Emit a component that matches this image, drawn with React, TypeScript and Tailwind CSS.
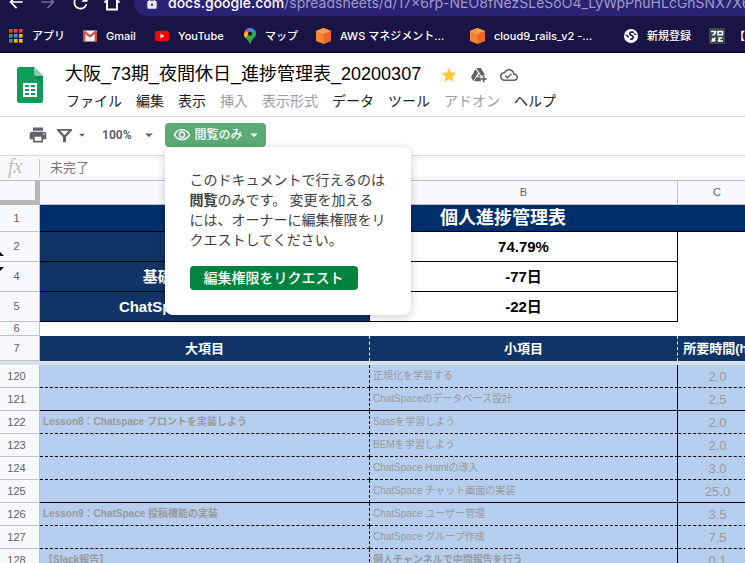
import type { ReactNode } from "react";
import {
  MdArrowBack,
  MdArrowDropDown,
  MdArrowForward,
  MdLock,
  MdOutlineCloudDone,
  MdOutlineVisibility,
  MdPrint,
  MdRefresh,
  MdStar,
} from "react-icons/md";

const uiFont = "font-['Roboto','Noto_Sans_CJK_JP',sans-serif]";
const chromeFont = "font-['Inter','Noto_Sans_CJK_JP',sans-serif]";
const sheetFont = "font-['Liberation_Sans','Noto_Sans_CJK_JP',sans-serif]";

/* ---------- icons ---------- */

function AppsIcon() {
  const colors = [
    "#ea4335", "#ea4335", "#ea4335",
    "#34a853", "#4285f4", "#fbbc04",
    "#34a853", "#fbbc04", "#fbbc04",
  ];
  return (
    <svg width="14" height="14" viewBox="0 0 14 14" aria-hidden="true">
      {colors.map((c, i) => (
        <rect key={i} x={(i % 3) * 5} y={Math.floor(i / 3) * 5} width="3.6" height="3.6" fill={c} />
      ))}
    </svg>
  );
}

function GmailIcon() {
  return (
    <svg width="14" height="14" viewBox="0 0 14 14" aria-hidden="true">
      <rect y="1.5" width="14" height="11" rx="1" fill="#f1f1f1" />
      <path d="M0 2.5v9a1 1 0 0 0 1 1h1.3V3.8z" fill="#d54b3d" />
      <path d="M14 2.5v9a1 1 0 0 1-1 1h-1.3V3.8z" fill="#d54b3d" />
      <path d="M.8 2.4 7 7.4l6.2-5" stroke="#d54b3d" strokeWidth="2" fill="none" />
    </svg>
  );
}

function YouTubeIcon() {
  return (
    <svg width="14" height="14" viewBox="0 0 14 14" aria-hidden="true">
      <rect y="1.8" width="14" height="10.4" rx="2.6" fill="#f00" />
      <path d="M5.5 4.8v4.4L9.4 7z" fill="#fff" />
    </svg>
  );
}

function MapsIcon() {
  return (
    <svg width="12" height="16" viewBox="0 0 12 16" aria-hidden="true">
      <path d="M6 0C2.7 0 0 2.6 0 5.9c0 1.6.5 2.8 1.3 3.9L6 5.9z" fill="#ea4335" />
      <path d="M6 0c3.3 0 6 2.6 6 5.900L6 5.9 3 1z" fill="#4285f4" />
      <path d="M0 5.900c0 1.700.6 2.900 1.500 4.100L6 5.900 2 3z" fill="#fbbc04" />
      <path d="M12 5.900C12 10 7.200 10.700 6.500 15.500c-.1.500-.9.500-1 0C5.100 13 3.400 11.600 1.500 10L10.500 2c1 1 1.500 2.400 1.500 3.900z" fill="#34a853" />
      <circle cx="6" cy="5.8" r="2.1" fill="#1a1444" />
    </svg>
  );
}

function CubeIcon() {
  return (
    <svg width="15" height="16" viewBox="0 0 15 16" aria-hidden="true">
      <path d="M7.500 0 15 3v10l-7.500 3L0 13V3z" fill="#f58536" />
      <path d="M7.500 0 15 3 7.500 6 0 3z" fill="#ff9d4d" />
      <path d="M15 3v10l-7.500 3V6z" fill="#ec6629" />
    </svg>
  );
}

function GlobeIcon() {
  return (
    <svg width="14" height="14" viewBox="0 0 14 14" aria-hidden="true">
      <circle cx="7" cy="7" r="7" fill="#fff" />
      <path d="M10 3.500C8 2.500 5.800 3.200 5.800 4.800c0 2 3.600 1.300 3.600 3.300 0 1.800-2.200 2.600-3.200 1.600" stroke="#1a1444" strokeWidth="1.700" fill="none" />
      <path d="M1.500 6.200c1.800 0 2.700.8 3 2.300M9.800 4.800c.9.500 1.800.7 2.700.5" stroke="#1a1444" strokeWidth="1.300" fill="none" />
    </svg>
  );
}

function ProMemoIcon() {
  return (
    <svg width="16" height="16" viewBox="0 0 16 16" aria-hidden="true">
      <rect width="16" height="16" fill="#38474a" />
      <path d="M2 3.500h4.500c0 2-1 3-3 3.700M9 3.500h4.500v3.200H9zM6 9.500c-.3 2-1.600 3.400-3.700 4M3 10.500l3.200 2.500M9.300 10h4M8.700 13h5.300M10.300 10v3" stroke="#fff" strokeWidth="1.600" fill="none" />
    </svg>
  );
}

function HomeIcon() {
  return (
    <svg width="18" height="18" viewBox="0 0 18 18" aria-hidden="true">
      <path d="M1.500 9.500 9 2.500l7.500 7M4 8v8.500h10V8" stroke="#fff" strokeWidth="1.900" fill="none" />
    </svg>
  );
}

function SheetsLogo() {
  return (
    <svg width="26" height="36" viewBox="0 0 26 36" className="shrink-0" aria-label="スプレッドシート" role="img">
      <path d="M2.500 0H17l9 9v24.500a2.500 2.500 0 0 1-2.500 2.500h-21A2.500 2.500 0 0 1 0 33.500v-31A2.500 2.500 0 0 1 2.500 0z" fill="#0f9d58" />
      <path d="M17 0l9 9h-6.500A2.500 2.500 0 0 1 17 6.500z" fill="#87ceac" />
      <path d="M17.500 9H26v8z" fill="#0b8a4c" opacity=".5" />
      <path d="M6 16v14h14V16zm2 2h4v2H8zm6 0h4v2h-4zm-6 4h4v2H8zm6 0h4v2h-4zm-6 4h4v2H8zm6 0h4v2h-4z" fill="#fff" fillRule="evenodd" />
    </svg>
  );
}

function DriveAddIcon() {
  return (
    <svg width="18" height="18" viewBox="0 0 18 18" aria-hidden="true">
      <path d="M6.400 2h4.400l4.300 7.300a4 4 0 0 0-3.600.9z" fill="#5f6368" />
      <path d="M5.700 2.900 8 6.900 3.300 15 1 11z" fill="#5f6368" />
      <path d="M6.300 11.300h4.500a4 4 0 0 0 .3 4H4z" fill="#5f6368" />
      <path d="M9 7.900l1.500 2.500H7.500z" fill="#5f6368" />
      <path d="M13.700 9.800v6.400M10.500 13h6.400" stroke="#5f6368" strokeWidth="1.600" />
    </svg>
  );
}

function FilterIcon() {
  return (
    <svg width="15" height="13" viewBox="0 0 15 13" aria-hidden="true">
      <path d="M0 0h15v1.500L9 8v5H6V8L0 1.500zM3.300 1.800l4.200 4.400 4.200-4.400z" fill="#5f6368" fillRule="evenodd" />
    </svg>
  );
}

/* ---------- browser ---------- */

const bookmarks: { icon: ReactNode; label: string; width: string }[] = [
  { icon: <AppsIcon />, label: "アプリ", width: "w-[74px]" },
  { icon: <GmailIcon />, label: "Gmail", width: "w-[72px]" },
  { icon: <YouTubeIcon />, label: "YouTube", width: "w-[89px]" },
  { icon: <MapsIcon />, label: "マップ", width: "w-[72px]" },
  { icon: <CubeIcon />, label: "AWS マネジメント…", width: "w-[154px]" },
  { icon: <CubeIcon />, label: "cloud9_rails_v2 -…", width: "w-[154px]" },
  { icon: <GlobeIcon />, label: "新規登録", width: "w-[85px]" },
  { icon: <ProMemoIcon />, label: "【", width: "w-[90px]" },
];

function BrowserBar() {
  return (
    <div className={`${chromeFont} shrink-0 overflow-hidden border-b border-[#0a0533] bg-[#1a1444] text-white`}>
      <div className="flex h-4 items-end overflow-hidden">
        <div className="flex h-[28px] shrink-0 items-center gap-[12px] pl-[6px] pr-[13px]">
          <button aria-label="戻る"><MdArrowBack size={20} /></button>
          <button aria-label="進む"><MdArrowForward size={20} className="text-[#6e6a93]" /></button>
          <button aria-label="再読み込み"><MdRefresh size={21} /></button>
          <button aria-label="ホーム"><HomeIcon /></button>
        </div>
        <label className="flex h-[26px] min-w-0 flex-1 items-center rounded-l-full bg-[#2b2273] pl-[11px] text-[14px] leading-5">
          <MdLock size={14} className="mr-[9px] shrink-0 text-[#e8e8f0]" />
          <span className="font-medium">docs.google.com</span>
          <input
            aria-label="アドレス"
            className="min-w-0 flex-1 bg-transparent text-[#a09cc8] outline-none"
            defaultValue="/spreadsheets/d/17x6rp-NEO8fNezSLeSoO4_LyWpPhuHLcGhSNX7X6t"
          />
        </label>
      </div>
      <nav className="flex h-[36px] items-center pt-1 pl-[9px] text-[11px] font-medium">
        {bookmarks.map((b) => (
          <a key={b.label} href="#" className={`${b.width} flex shrink-0 items-center gap-[9px] whitespace-nowrap leading-4`}>
            {b.icon}
            {b.label}
          </a>
        ))}
      </nav>
    </div>
  );
}

/* ---------- document header ---------- */

const menus = [
  { label: "ファイル" },
  { label: "編集" },
  { label: "表示" },
  { label: "挿入", disabled: true },
  { label: "表示形式", disabled: true },
  { label: "データ" },
  { label: "ツール" },
  { label: "アドオン", disabled: true },
  { label: "ヘルプ" },
];

function DocHeader() {
  return (
    <header className="flex h-[64px] shrink-0 items-start border-b border-[#dadce0] pl-[17px]">
      <div className="pt-[14px]"><SheetsLogo /></div>
      <div className="pt-[9px] pl-[22px]">
        <div className="flex h-6 items-center">
          <h1 className={`${sheetFont} whitespace-nowrap text-[18px] leading-6 text-black`}>
            大阪_73期_夜間休日_進捗管理表_20200307
          </h1>
          <div className="flex items-center gap-[12px] pl-[19px] pt-[2px] text-[#5f6368]">
            <button aria-label="スター"><MdStar size={18} className="text-[#fcc934]" /></button>
            <button aria-label="ドライブに追加"><DriveAddIcon /></button>
            <button aria-label="ドキュメントのステータス"><MdOutlineCloudDone size={18} /></button>
          </div>
        </div>
        <nav className="flex gap-[14px] pt-[5px] pl-px text-[14px] leading-5">
          {menus.map((m) => (
            <button key={m.label} disabled={m.disabled} className="whitespace-nowrap text-[#202124] disabled:text-[#9aa0a6]">
              {m.label}
            </button>
          ))}
        </nav>
      </div>
    </header>
  );
}

function AccessPopup() {
  return (
    <div
      role="dialog"
      aria-label="閲覧のみ"
      className="absolute left-0 top-full z-10 w-[246px] rounded-lg bg-white px-[25px] pb-[25px] pt-[23px] shadow-[0_2px_10px_rgba(0,0,0,0.2)]"
    >
      <p className="text-[14px] leading-5 text-[#3c4043]">
        このドキュメントで行えるのは<b>閲覧</b>のみです。 変更を加えるには、オーナーに編集権限をリクエストしてください。
      </p>
      <button className="mt-4 flex h-6 items-center whitespace-nowrap rounded bg-[#00833e] px-[14px] text-[14px] font-medium leading-none text-white">
        編集権限をリクエスト
      </button>
    </div>
  );
}

function Toolbar() {
  return (
    <div className="flex h-[39px] shrink-0 items-center border-b border-[#dadce0] pb-[2px] pl-[28px] text-[#5f6368]">
      <button aria-label="印刷"><MdPrint size={20} /></button>
      <button aria-label="フィルタ" className="flex items-center pl-[9px]">
        <FilterIcon />
        <MdArrowDropDown size={14} className="ml-[3px]" />
      </button>
      <button aria-label="ズーム" className="flex items-center pl-[13px] text-[12px] font-bold">
        100%
        <MdArrowDropDown size={18} className="ml-[8px]" />
      </button>
      <div className="relative ml-[7px]">
        <button className="flex h-6 w-[101px] items-center rounded bg-[#5bab77] pl-2 text-[12px] font-medium leading-none text-white">
          <MdOutlineVisibility size={18} className="mr-1 shrink-0" />
          <span className="whitespace-nowrap">閲覧のみ</span>
          <MdArrowDropDown size={18} className="ml-[2px] shrink-0" />
        </button>
        <AccessPopup />
      </div>
    </div>
  );
}

function FormulaBar() {
  return (
    <label className="flex h-[25px] shrink-0 items-center border-b border-[#c0c0c0] bg-[#f8f9fa]">
      <span className="w-[39px] pb-1 pl-[8px] font-['Liberation_Serif',serif] text-[20px] italic leading-none text-[#c0c0c0]">fx</span>
      <span className="h-[18px] w-px bg-[#c6c6c6]" />
      <input
        aria-label="数式"
        readOnly
        value="未完了"
        className="ml-[10px] h-4 min-w-0 flex-1 bg-white text-[13px] leading-4 text-[#777] outline-none"
      />
    </label>
  );
}

/* ---------- grid ---------- */

type Row = { n: number; a?: string; b: string; c: string; bold?: boolean; end?: boolean };

const rows: Row[] = [
  { n: 120, b: "正規化を学習する", c: "2.0" },
  { n: 121, b: "ChatSpaceのデータベース設計", c: "2.5", end: true },
  { n: 122, a: "Lesson8：Chatspace フロントを実装しよう", b: "Sassを学習しよう", c: "2.0" },
  { n: 123, b: "BEMを学習しよう", c: "2.0" },
  { n: 124, b: "ChatSpace Hamlの導入", c: "3.0" },
  { n: 125, b: "ChatSpace チャット画面の実装", c: "25.0", end: true },
  { n: 126, a: "Lesson9：ChatSpace 投稿機能の実装", b: "ChatSpace ユーザー管理", c: "3.5" },
  { n: 127, b: "ChatSpace グループ作成", c: "7.5" },
  { n: 128, a: "【Slack報告】", b: "個人チャンネルで中間報告を行う", c: "0.1", bold: true },
];

const summary = [
  { n: 2, label: "進捗率", value: "74.79%" },
  { n: 4, label: "基礎 カリキュラム", value: "-77日" },
  { n: 5, label: "ChatSpace カリキュラム", value: "-22日" },
];

function RowHead({ n, children }: { n: number; children?: ReactNode }) {
  return (
    <th
      scope="row"
      className="relative border-r border-b border-[#c0c0c0] bg-[#f8f9fc] pr-[6px] text-center text-[11px] font-normal text-[#5f6368]"
    >
      {n}
      {children}
    </th>
  );
}

const colHead = "border-r border-b border-[#c0c0c0] bg-[#f8f9fc] text-center text-[11px] font-normal text-[#5f6368]";

function Grid() {
  return (
    <main className={`${sheetFont} min-h-0 flex-1 overflow-hidden`}>
      <table className="w-[966px] table-fixed border-separate border-spacing-0 whitespace-nowrap leading-none">
        <colgroup>
          <col className="w-[40px]" />
          <col className="w-[330px]" />
          <col className="w-[308px]" />
          <col className="w-[79px]" />
          <col className="w-[209px]" />
        </colgroup>
        <thead>
          <tr className="h-[24px]">
            <td className="border-r-5 border-b-5 border-[#b7b7b7] bg-[#f8f9fc]" />
            <th scope="col" className={colHead}>A</th>
            <th scope="col" className={colHead}>B</th>
            <th scope="col" className={colHead}>C</th>
            <th scope="col" className={colHead}>D</th>
          </tr>
        </thead>
        <tbody>
          <tr className="h-[27px]">
            <RowHead n={1} />
            <td colSpan={4} className="border-b border-black bg-[#002e6b] text-center text-[18px] font-bold text-white">
              個人進捗管理表
            </td>
          </tr>
          {summary.map((s) => (
            <tr key={s.n} className="h-[30px] text-[15px] font-bold">
              <RowHead n={s.n}>
                {s.n === 2 && (
                  <svg className="absolute bottom-[5px] left-0" width="4" height="4" viewBox="0 0 4 4" aria-hidden="true">
                    <path d="M0 0l4 4H0z" />
                  </svg>
                )}
                {s.n === 4 && (
                  <svg className="absolute left-0 top-[5px]" width="4" height="4" viewBox="0 0 4 4" aria-hidden="true">
                    <path d="M0 4l4-4H0z" />
                  </svg>
                )}
              </RowHead>
              <td className="border-r border-b border-black bg-[#113467] text-center text-white">{s.label}</td>
              <td className="border-r border-b border-black text-center text-black">{s.value}</td>
              <td colSpan={2} />
            </tr>
          ))}
          <tr className="h-[14px]">
            <RowHead n={6} />
            <td colSpan={4} />
          </tr>
          <tr className="h-[25px] bg-[#113467] text-center text-[13px] font-bold text-white">
            <RowHead n={7} />
            <td className="border-r border-dashed border-white">大項目</td>
            <td className="border-r border-dashed border-white">小項目</td>
            <td>所要時間(h)</td>
            <td />
          </tr>
          <tr className="h-1">
            <td colSpan={5} className="bg-[#dadfe8]" />
          </tr>
          {rows.map((r) => {
            const line = r.end ? "[border-bottom-style:solid]" : "[border-bottom-style:dashed]";
            return (
              <tr key={r.n} className="h-[23px] bg-[#b6cfee] text-[10px] text-[#999]">
                <RowHead n={r.n} />
                <td className={`${line} border-r border-b border-black pl-[3px] font-bold [border-right-style:dashed]`}>{r.a}</td>
                <td className={`${line} border-r border-b border-black pl-[3px] ${r.bold ? "font-bold" : ""}`}>{r.b}</td>
                <td className={`${line} border-b border-black text-center text-[13px]`}>{r.c}</td>
                <td className={`${line} border-b border-l border-black`} />
              </tr>
            );
          })}
        </tbody>
      </table>
    </main>
  );
}

export default function App() {
  return (
    <div className={`${uiFont} flex h-screen w-full flex-col overflow-hidden bg-white`}>
      <BrowserBar />
      <DocHeader />
      <Toolbar />
      <FormulaBar />
      <Grid />
    </div>
  );
}
